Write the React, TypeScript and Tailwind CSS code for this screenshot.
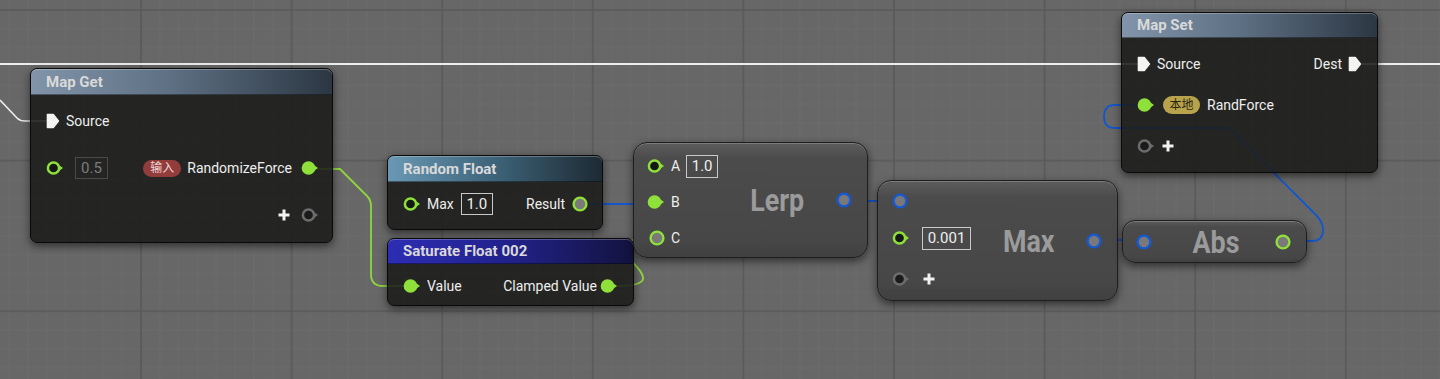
import React from "react";

type PinKind = "in" | "on" | "ringGreen" | "ringBlue" | "add";

function Pin({ kind }: { kind: PinKind }) {
  if (kind === "ringGreen" || kind === "ringBlue") {
    const stroke = kind === "ringGreen" ? "#8fe03a" : "#1559d4";
    return (
      <svg width="16" height="16" viewBox="0 0 16 16" className="shrink-0">
        <circle cx="8" cy="8" r="6.4" fill="#7a7878" stroke={stroke} strokeWidth="2.4" />
      </svg>
    );
  }
  const color = kind === "add" ? "#6c6c6c" : "#8fe03a";
  const fill = kind === "on" ? "#8fe03a" : kind === "add" ? "#1b1b1b" : "#161816";
  return (
    <svg width="18" height="16" viewBox="0 0 18 16" className="shrink-0">
      <path d="M13.2 5.2 L17 8 L13.2 10.8 Z" fill={color} />
      <circle cx="7.5" cy="8" r="5.6" fill={fill} stroke={color} strokeWidth="2.5" />
    </svg>
  );
}

function Exec() {
  return (
    <svg width="14" height="16" viewBox="0 0 14 16" className="shrink-0">
      <path
        d="M1.5 1.5 H7.2 L12.4 8 L7.2 14.5 H1.5 Z"
        fill="#f4f4f4"
        stroke="#f4f4f4"
        strokeWidth="1.6"
        strokeLinejoin="round"
      />
    </svg>
  );
}

function Plus() {
  return (
    <svg width="12" height="12" viewBox="0 0 12 12" className="shrink-0">
      <path d="M6 0.5 V11.5 M0.5 6 H11.5" stroke="#f2f2f2" strokeWidth="3" />
    </svg>
  );
}

function Header({ title, className }: { title: string; className: string }) {
  return (
    <div
      className={
        "rounded-t-[6px] pl-[15px] text-[15px] font-bold text-[#d9d9d9] shadow-[inset_0_1px_0_rgba(255,255,255,0.25),inset_0_-1px_0_rgba(0,0,0,0.4)] " +
        className
      }
    >
      {title}
    </div>
  );
}

function Grid() {
  return (
    <svg className="absolute inset-0" width="1440" height="379">
      <defs>
        <pattern id="minor" x="140" y="9" width="18.825" height="18.825" patternUnits="userSpaceOnUse">
          <path d="M1 0 V18.825 M0 1 H18.825" stroke="#6b6b6b" strokeWidth="1" />
        </pattern>
        <pattern id="major" x="140" y="9" width="150.6" height="150.6" patternUnits="userSpaceOnUse">
          <path d="M1 0 V150.6 M0 1 H150.6" stroke="#585858" strokeWidth="1.6" />
        </pattern>
      </defs>
      <rect width="1440" height="379" fill="url(#minor)" />
      <rect width="1440" height="379" fill="url(#major)" />
    </svg>
  );
}

function Wires() {
  return (
    <svg className="absolute inset-0" width="1440" height="379" fill="none">
      {/* exec */}
      <path d="M0 64 H1138" stroke="#ededed" strokeWidth="2" />
      <path d="M1362 64 H1440" stroke="#ededed" strokeWidth="2" />
      <path d="M0 100 L17 118 Q20 121 25 121 H47" stroke="#ededed" strokeWidth="1.6" />
      {/* float green */}
      <path
        d="M318 169 H340 L367 196 Q371 200 371 206 V274 Q371 286 383 286 H404"
        stroke="#8fd63c"
        strokeWidth="1.8"
      />
      <path d="M617 286 C692 286 574 239 649 239" stroke="#8fd63c" strokeWidth="1.8" />
      {/* float blue */}
      <path d="M588 204 H648" stroke="#1457cc" strokeWidth="1.8" />
      <path d="M852 201 H893" stroke="#1457cc" strokeWidth="1.8" />
      <path d="M1102 240 H1137" stroke="#1457cc" strokeWidth="1.8" />
      <path
        d="M1291 241 H1312 Q1323 241 1323 230 Q1323 222 1316 215 L1230 129 Q1229 128 1225 128 H1115 Q1104 128 1104 117 Q1104 105 1115 105 H1138"
        stroke="#1457cc"
        strokeWidth="1.8"
      />
    </svg>
  );
}

const nodeBase =
  "absolute rounded-[7px] border border-[#0a0a0a] bg-[rgba(27,29,26,0.88)] shadow-[0_3px_8px_rgba(0,0,0,0.55)]";
const compactBase =
  "absolute flex border border-[#1e1e1e] bg-[linear-gradient(to_bottom,#5c5c5c,#4b4b4b_14%,#474747_85%,#404040)] shadow-[inset_0_1px_0_rgba(255,255,255,0.2),0_3px_8px_rgba(0,0,0,0.55)]";
const label = "text-[14px] text-[#eeeeee] leading-none";
const bigTitle = "inline-block text-[32px] font-bold leading-none text-[#9b9b9b] scale-x-[0.84]";

export default function App() {
  return (
    <div className="relative h-[379px] w-[1440px] overflow-hidden bg-[#676767] font-['Roboto','Noto_Sans_CJK_SC',sans-serif]">
      <Grid />
      <Wires />

      {/* Map Get */}
      <div className={nodeBase + " left-[30px] top-[68px] h-[175px] w-[303px]"}>
        <Header
          title="Map Get"
          className="h-[26px] leading-[26px] bg-[linear-gradient(to_right,#8194a9,#5f7185_45%,#2c3743)]"
        />
        <div className="flex flex-col gap-[23px] pl-[15px] pr-[13px] pt-[14px]">
          <div className="flex h-[24px] items-center gap-[6px]">
            <Exec />
            <span className={label}>Source</span>
          </div>
          <div className="flex h-[24px] items-center justify-between">
            <div className="flex items-center gap-[11px]">
              <Pin kind="in" />
              <div className="flex h-[22px] w-[33px] items-center justify-center border border-[#4a4a4a] text-[15px] text-[#7c7c7c]">
                0.5
              </div>
            </div>
            <div className="flex items-center">
              <span className="flex h-[17px] w-[38px] items-center justify-center rounded-full bg-[#933c3c] text-[12px] text-[#f0d6d6]">
                输入
              </span>
              <span className={label + " ml-[6px]"}>RandomizeForce</span>
              <span className="ml-[9px]">
                <Pin kind="on" />
              </span>
            </div>
          </div>
          <div className="flex h-[24px] items-center justify-end gap-[11px]">
            <Plus />
            <Pin kind="add" />
          </div>
        </div>
      </div>

      {/* Random Float */}
      <div className={nodeBase + " left-[387px] top-[155px] h-[75px] w-[216px]"}>
        <Header
          title="Random Float"
          className="h-[26px] leading-[26px] bg-[linear-gradient(to_right,#6a98b4,#3d6379_50%,#1d2a33)]"
        />
        <div className="flex h-[24px] items-center justify-between pl-[15px] pr-[14px] mt-[10px]">
          <div className="flex items-center">
            <Pin kind="in" />
            <span className={label + " ml-[6px]"}>Max</span>
            <div className="ml-[7px] flex h-[22px] w-[32px] items-center justify-center border border-[#c9c9c9] text-[15px] text-[#eeeeee]">
              1.0
            </div>
          </div>
          <div className="flex items-center gap-[7px]">
            <span className={label}>Result</span>
            <Pin kind="ringGreen" />
          </div>
        </div>
      </div>

      {/* Saturate Float 002 */}
      <div className={nodeBase + " left-[387px] top-[238px] h-[68px] w-[247px]"}>
        <Header
          title="Saturate Float 002"
          className="h-[25px] leading-[25px] bg-[linear-gradient(to_right,#2d2db4,#21218a_50%,#13133f)]"
        />
        <div className="flex h-[24px] items-center justify-between pl-[15px] pr-[15px] mt-[10px]">
          <div className="flex items-center gap-[6px]">
            <Pin kind="on" />
            <span className={label}>Value</span>
          </div>
          <div className="flex items-center gap-[3px]">
            <span className={label}>Clamped Value</span>
            <Pin kind="on" />
          </div>
        </div>
      </div>

      {/* Lerp */}
      <div className={compactBase + " left-[633px] top-[142px] h-[116px] w-[235px] rounded-[14px]"}>
        <div className="flex flex-col gap-[12px] pl-[13px] pt-[11px]">
          <div className="flex h-[24px] items-center">
            <Pin kind="in" />
            <span className={label + " ml-[6px]"}>A</span>
            <div className="ml-[6px] flex h-[23px] w-[32px] items-center justify-center border border-[#c9c9c9] text-[15px] text-[#eeeeee]">
              1.0
            </div>
          </div>
          <div className="flex h-[24px] items-center">
            <Pin kind="on" />
            <span className={label + " ml-[6px]"}>B</span>
          </div>
          <div className="flex h-[24px] items-center">
            <span className="ml-[2px]">
              <Pin kind="ringGreen" />
            </span>
            <span className={label + " ml-[6px]"}>C</span>
          </div>
        </div>
        <div className="flex flex-1 items-center justify-center">
          <span className={bigTitle}>Lerp</span>
        </div>
        <div className="flex items-center pr-[15px]">
          <Pin kind="ringBlue" />
        </div>
      </div>

      {/* Max */}
      <div className={compactBase + " left-[877px] top-[180px] h-[121px] w-[241px] rounded-[14px]"}>
        <div className="flex flex-col pl-[14px] pt-[8px]">
          <div className="flex h-[24px] items-center">
            <Pin kind="ringBlue" />
          </div>
          <div className="mt-[13px] flex h-[24px] items-center">
            <Pin kind="in" />
            <div className="ml-[12px] flex h-[23px] w-[49px] items-center justify-center border border-[#c9c9c9] text-[15px] text-[#eeeeee]">
              0.001
            </div>
          </div>
          <div className="mt-[17px] flex h-[24px] items-center">
            <Pin kind="add" />
            <span className="ml-[13px]">
              <Plus />
            </span>
          </div>
        </div>
        <div className="flex flex-1 items-center justify-center">
          <span className={bigTitle}>Max</span>
        </div>
        <div className="flex items-center pr-[15px]">
          <Pin kind="ringBlue" />
        </div>
      </div>

      {/* Abs */}
      <div className={compactBase + " left-[1122px] top-[220px] h-[43px] w-[185px] items-center rounded-[13px] pl-[13px] pr-[15px]"}>
        <Pin kind="ringBlue" />
        <div className="flex flex-1 items-center justify-center pl-[4px]">
          <span className={bigTitle}>Abs</span>
        </div>
        <Pin kind="ringGreen" />
      </div>

      {/* Map Set */}
      <div className={nodeBase + " left-[1121px] top-[12px] h-[161px] w-[257px]"}>
        <Header
          title="Map Set"
          className="h-[25px] leading-[25px] bg-[linear-gradient(to_right,#8194a9,#5f7185_45%,#2c3743)]"
        />
        <div className="flex flex-col gap-[17px] pl-[15px] pr-[15px] pt-[14px]">
          <div className="flex h-[24px] items-center justify-between">
            <div className="flex items-center gap-[6px]">
              <Exec />
              <span className={label}>Source</span>
            </div>
            <div className="flex items-center gap-[6px]">
              <span className={label}>Dest</span>
              <Exec />
            </div>
          </div>
          <div className="flex h-[24px] items-center">
            <Pin kind="on" />
            <span className="ml-[8px] flex h-[18px] w-[37px] items-center justify-center rounded-full bg-[#b8a24c] text-[12px] text-[#2b2812]">
              本地
            </span>
            <span className={label + " ml-[7px]"}>RandForce</span>
          </div>
          <div className="flex h-[24px] items-center gap-[7px]">
            <Pin kind="add" />
            <Plus />
          </div>
        </div>
      </div>
    </div>
  );
}
